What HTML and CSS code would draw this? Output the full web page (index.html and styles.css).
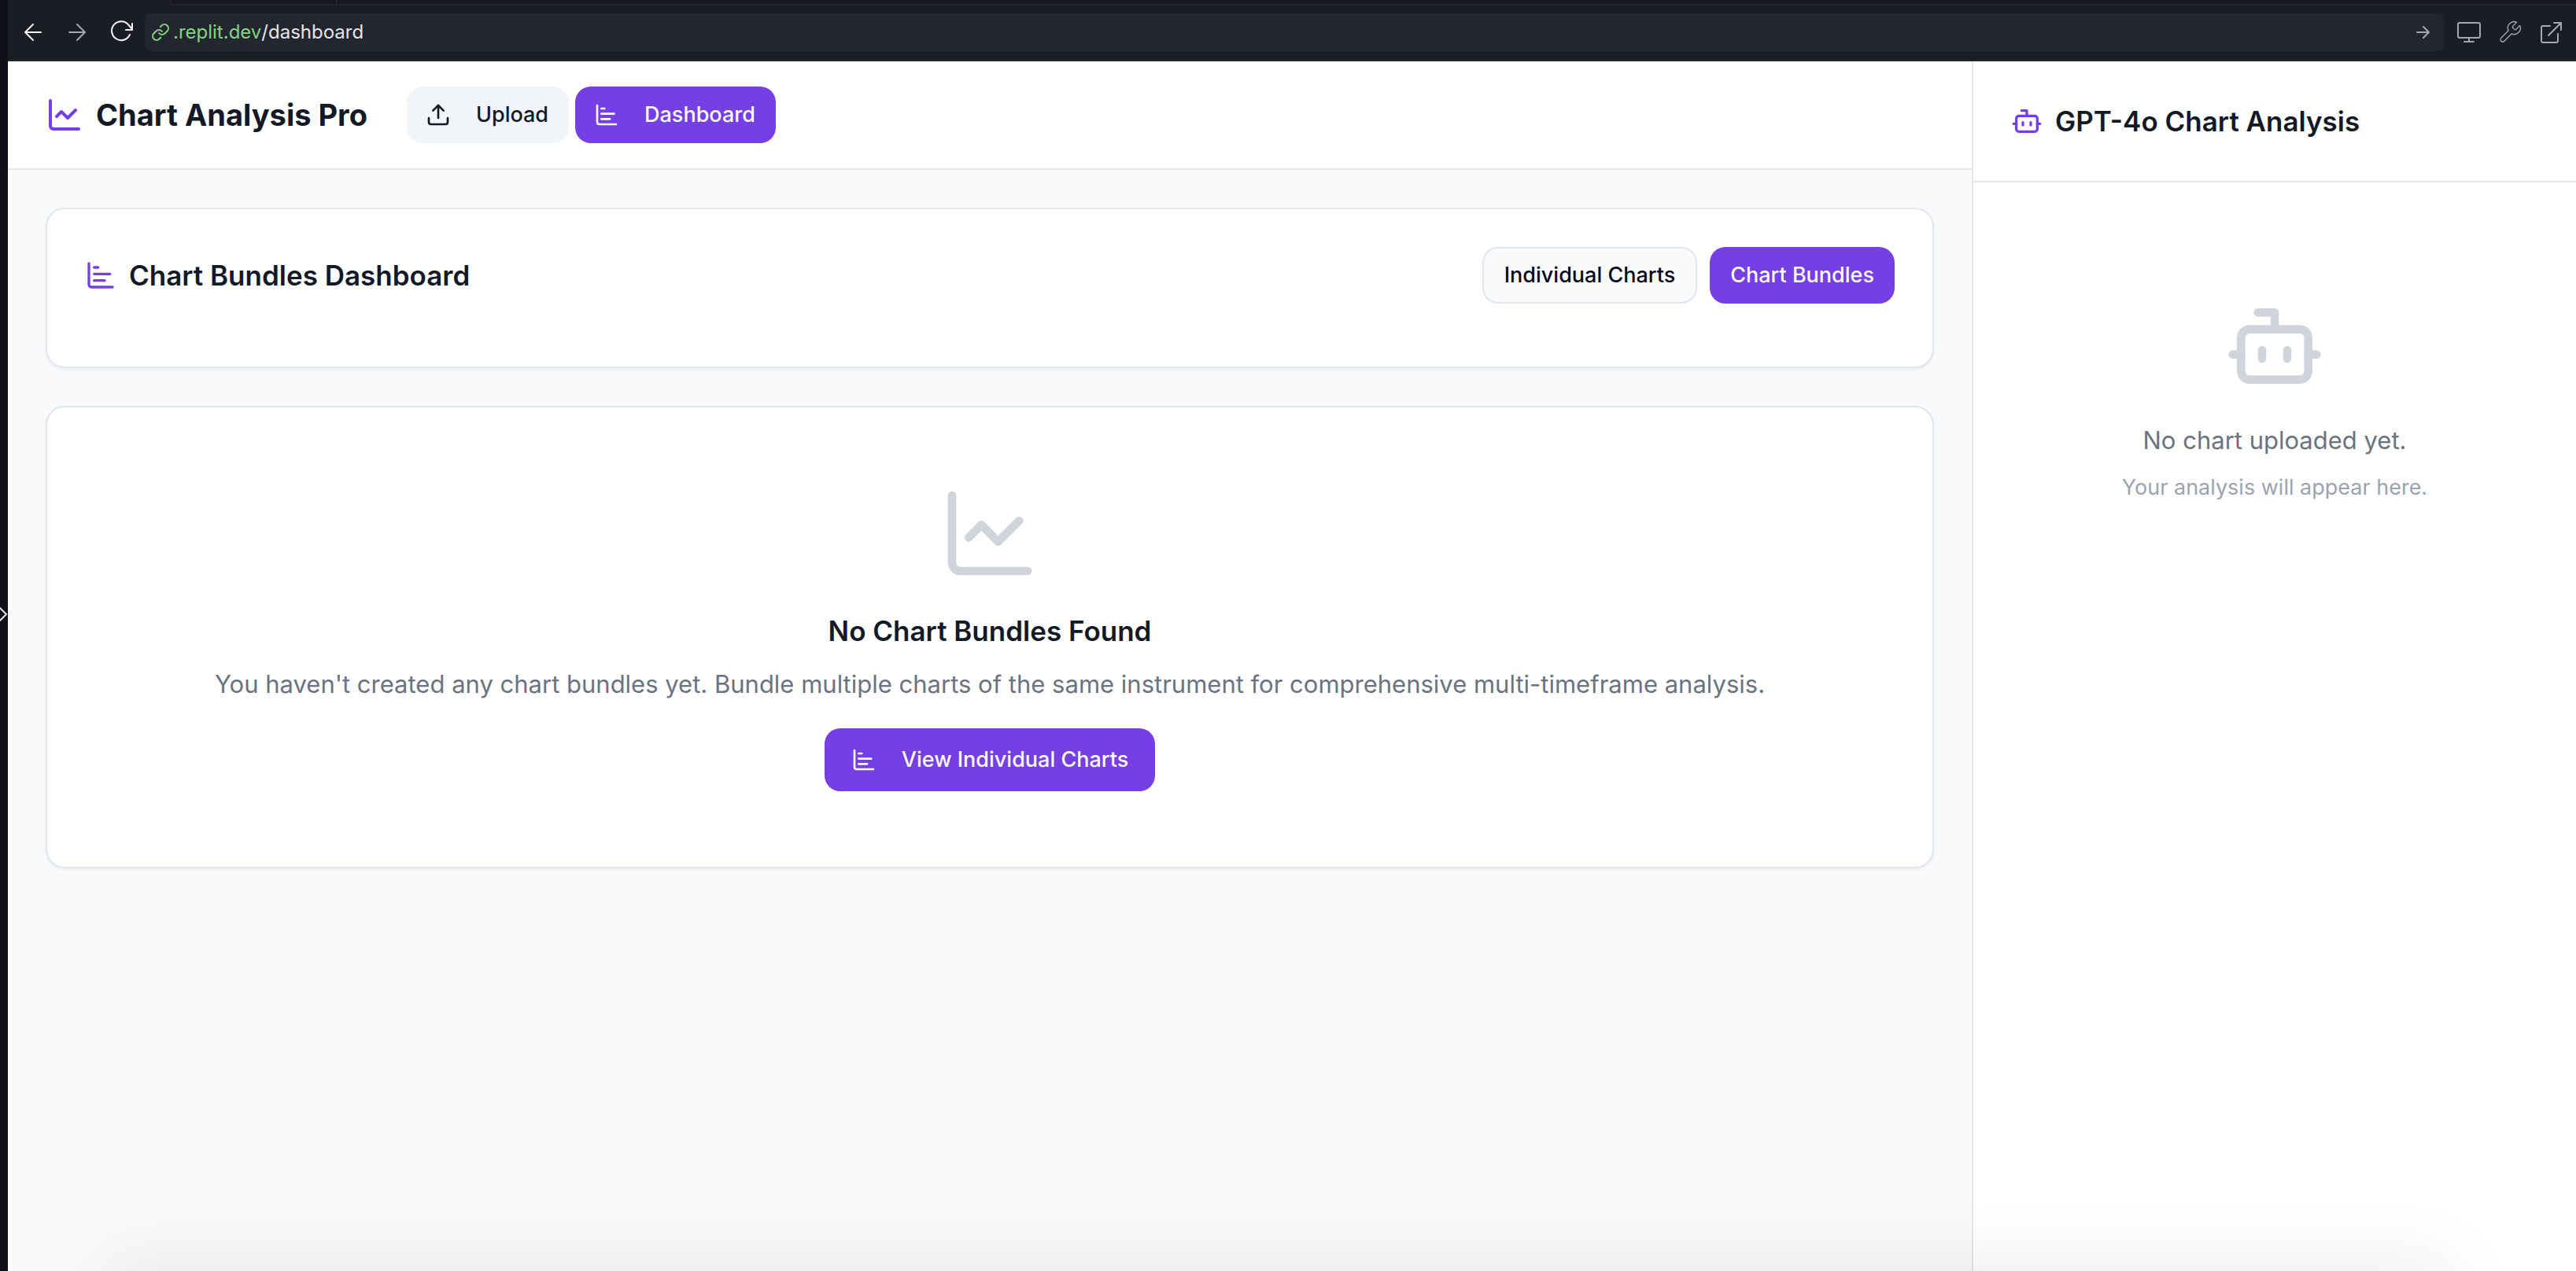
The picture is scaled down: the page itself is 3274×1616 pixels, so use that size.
FILE: index.html
```html
<!DOCTYPE html>
<html lang="en">
<head>
<meta charset="utf-8">
<title>Chart Analysis Pro</title>
<link rel="stylesheet" href="styles.css">
</head>
<body>
<svg class="defs" aria-hidden="true">
  <symbol id="chart-line" viewBox="0 0 24 24"><path d="M3 3v16a2 2 0 0 0 2 2h16"/><path d="m19 9-5 5-4-4-3 3"/></symbol>
  <symbol id="chart-bar" viewBox="0 0 24 24"><path d="M3 3v16a2 2 0 0 0 2 2h16"/><path d="M7 16h8"/><path d="M7 11h12"/><path d="M7 6h3"/></symbol>
  <symbol id="upload" viewBox="0 0 24 24"><path d="M3 15v4a2 2 0 0 0 2 2h14a2 2 0 0 0 2-2v-4"/><path d="m17 8-5-5-5 5"/><path d="M12 3v12"/></symbol>
  <symbol id="bot" viewBox="0 0 24 24"><path d="M12 8V4H8"/><rect width="16" height="12" x="4" y="8" rx="2"/><path d="M2 14h2"/><path d="M20 14h2"/><path d="M15 13v2"/><path d="M9 13v2"/></symbol>
</svg>

<div class="app">
  <div class="resizer">
    <svg class="resizer-icon" viewBox="0 0 10 20"><path d="M0 2l8 8-8 8"/></svg>
  </div>

  <div class="window">
    <div class="browser">
      <div class="tab-edge"><span></span><span></span></div>
      <div class="toolbar">
        <nav class="history">
          <button class="tool bright" aria-label="Back"><svg viewBox="0 0 32 32"><path d="M26 16H6M16 6 6 16l10 10"/></svg></button>
          <button class="tool" aria-label="Forward"><svg viewBox="0 0 32 32"><path d="M6 16h20M16 6l10 10-10 10"/></svg></button>
          <button class="tool bright" aria-label="Reload"><svg viewBox="0 0 32 32"><path d="M30 5v8h-8M30 12l-4-4.500A12 12 0 1 0 27 19"/></svg></button>
        </nav>
        <div class="address">
          <svg class="link-icon" viewBox="0 0 24 24"><path d="M10 13a5 5 0 0 0 7.540.54l3-3a5 5 0 0 0-7.070-7.070l-1.720 1.710"/><path d="M14 11a5 5 0 0 0-7.540-.54l-3 3a5 5 0 0 0 7.070 7.070l1.710-1.710"/></svg>
          <label class="host" for="path">.replit.dev</label>
          <input class="path" id="path" type="text" value="/dashboard">
          <button class="go" aria-label="Go"><svg viewBox="0 0 24 24"><path d="M4 12h15M12 5l7 7-7 7"/></svg></button>
        </div>
        <div class="tools">
          <button class="tool" aria-label="Screen size"><svg viewBox="0 0 32 32"><rect x="2" y="4" width="28" height="19" rx="2"/><path d="M16 23v5M10 28h12"/></svg></button>
          <button class="tool" aria-label="Developer tools"><svg viewBox="0 0 24 24"><path d="M14.700 6.300a1 1 0 0 0 0 1.400l1.600 1.600a1 1 0 0 0 1.400 0l3.770-3.770a6 6 0 0 1-7.940 7.940l-6.910 6.910a2.120 2.120 0 0 1-3-3l6.910-6.910a6 6 0 0 1 7.940-7.940l-3.760 3.760z"/></svg></button>
          <button class="tool" aria-label="Open in new tab"><svg viewBox="0 0 32 32"><path d="M20 4h9v9M29 4 13 20M15 8H6a2 2 0 0 0-2 2v17a2 2 0 0 0 2 2h17a2 2 0 0 0 2-2v-9"/></svg></button>
        </div>
      </div>
    </div>

    <div class="page">
      <div class="content">
        <header class="header">
          <h1 class="brand"><svg class="icon icon-lg"><use href="#chart-line"/></svg>Chart Analysis Pro</h1>
          <nav class="nav">
            <button class="btn btn-muted"><svg class="icon icon-sm"><use href="#upload"/></svg>Upload</button>
            <button class="btn btn-primary"><svg class="icon icon-sm"><use href="#chart-bar"/></svg>Dashboard</button>
          </nav>
        </header>
        <main class="main">
          <section class="card card-head">
            <h2 class="title"><svg class="icon icon-md"><use href="#chart-bar"/></svg>Chart Bundles Dashboard</h2>
            <div class="switch">
              <button class="btn btn-outline">Individual Charts</button>
              <button class="btn btn-primary">Chart Bundles</button>
            </div>
          </section>
          <section class="card empty">
            <svg class="icon icon-xl"><use href="#chart-line"/></svg>
            <h3 class="empty-title">No Chart Bundles Found</h3>
            <p class="text">You haven't created any chart bundles yet. Bundle multiple charts of the same instrument for comprehensive multi-timeframe analysis.</p>
            <button class="btn btn-primary btn-lg"><svg class="icon icon-sm"><use href="#chart-bar"/></svg>View Individual Charts</button>
          </section>
        </main>
      </div>

      <aside class="aside">
        <header class="aside-head">
          <h2 class="title"><svg class="icon icon-md"><use href="#bot"/></svg>GPT-4o Chart Analysis</h2>
        </header>
        <div class="aside-empty">
          <svg class="icon icon-xl"><use href="#bot"/></svg>
          <p class="text">No chart uploaded yet.</p>
          <p class="hint">Your analysis will appear here.</p>
        </div>
      </aside>
      <div class="bottom-shade"></div>
    </div>
  </div>
</div>
</body>
</html>
```
FILE: styles.css
```css
:root {
  --purple: #763fe3;
  --ink: #131927;
  --border: #e1e5ee;
  --line: #e5e7eb;
  --page: #f9fafc;
  --font: Inter, "Liberation Sans", sans-serif;
}

* { box-sizing: border-box; }

body {
  margin: 0;
  font-family: var(--font);
  color: var(--ink);
  background: var(--page);
}

h1, h2, h3, p { margin: 0; }

button, input {
  font: inherit;
  color: inherit;
  border: 0;
  padding: 0;
  background: none;
}

.defs { position: absolute; width: 0; height: 0; }

svg {
  display: block;
  flex: none;
  fill: none;
  stroke: currentColor;
  stroke-width: 2;
  stroke-linecap: round;
  stroke-linejoin: round;
}

.app { display: flex; min-height: 100vh; }

/* Splitter at the left edge */
.resizer {
  display: flex;
  align-items: center;
  width: 10px;
  background: #0f1017;
  color: #e4e4ea;
}
.resizer-icon { width: 10px; height: 20px; margin-bottom: 54px; }

.window { display: flex; flex: 1; flex-direction: column; min-width: 0; }

/* Browser toolbar */
.browser { background: #1b1d25; border-bottom: 2px solid #252731; }

.tab-edge { display: flex; height: 6px; padding-left: 207px; }
.tab-edge span {
  width: 210px;
  background: #181720;
  border: solid #2a2c36;
  border-width: 0 0 1px 1px;
}
.tab-edge span:last-child { flex: 1; }

.toolbar { display: flex; align-items: center; height: 70px; padding-right: 16px; color: #a4a7b2; }

.history { display: flex; gap: 24px; padding: 0 14px 0 16px; }
.tool svg { width: 32px; height: 32px; }
.tool.bright { color: #f2f3f6; }

.address {
  display: flex;
  flex: 1;
  align-items: center;
  height: 48px;
  padding: 0 14px 0 8px;
  border-radius: 8px;
  background: #24262f;
  font-size: 24px;
  line-height: 32px;
}
.link-icon { width: 24px; height: 24px; margin-right: 4px; stroke-width: 2; }
.link-icon, .host { color: #80d580; }
.path { flex: 1; min-width: 0; height: 32px; color: #e4e4ea; outline: 0; }
.go svg { width: 24px; height: 24px; }

.tools { display: flex; gap: 20px; padding-left: 16px; }
.tools svg[viewBox="0 0 24 24"] { stroke-width: 1; }

/* Page */
.page {
  position: relative;
  display: grid;
  flex: 1;
  grid-template-columns: minmax(0, 1fr) 768px;
  overflow: hidden;
}

.header {
  display: flex;
  align-items: center;
  gap: 50px;
  padding: 32px 48px;
  background: #fff;
  border-bottom: 2px solid var(--line);
}

.brand {
  display: flex;
  align-items: center;
  gap: 16px;
  font-size: 38px;
  font-weight: 700;
  line-height: 56px;
}

.nav { display: flex; gap: 8px; }

.icon-sm { width: 32px; height: 32px; }
.icon-md { width: 40px; height: 40px; }
.icon-lg { width: 48px; height: 48px; }
.icon-xl { width: 128px; height: 128px; color: #d1d5db; margin-bottom: 32px; }
.brand .icon, .title .icon { color: var(--purple); }

.btn {
  display: flex;
  align-items: center;
  justify-content: center;
  gap: 32px;
  height: 72px;
  padding: 0 26px;
  border-radius: 20px;
  font-size: 27px;
  font-weight: 500;
  line-height: 40px;
  white-space: nowrap;
}
.nav .btn { padding-left: 24px; }
.btn-lg { height: 80px; padding: 0 34px; }
.btn-muted { background: #f1f4f8; }
.btn-primary { background: var(--purple); color: #f8f9fc; }
.btn-outline { background: var(--page); border: 2px solid var(--border); color: #04081a; }

.main { display: flex; flex-direction: column; gap: 48px; padding: 48px; }

.card {
  background: #fff;
  border: 2px solid var(--border);
  border-radius: 24px;
  box-shadow: 0 2px 4px rgba(0, 0, 0, .05);
}

.card-head {
  display: flex;
  align-items: center;
  justify-content: space-between;
  padding: 48px 48px 80px;
}

.title {
  display: flex;
  align-items: center;
  gap: 16px;
  font-size: 35px;
  font-weight: 600;
  line-height: 56px;
}

.switch { display: flex; gap: 16px; }

.empty {
  display: flex;
  flex-direction: column;
  align-items: center;
  padding: 96px 48px;
  text-align: center;
}
.empty-title { font-size: 35px; font-weight: 600; line-height: 56px; margin-bottom: 16px; }
.text { font-size: 31px; line-height: 48px; color: #6b7280; }
.empty .text { margin-bottom: 32px; }

/* Analysis panel */
.aside { background: #fff; border-left: 2px solid var(--line); }
.aside-head { padding: 48px; border-bottom: 2px solid var(--line); }
.aside-empty {
  display: flex;
  flex-direction: column;
  align-items: center;
  padding: 144px 48px;
}
.hint { margin-top: 16px; font-size: 27px; line-height: 40px; color: #9ca3af; }

/* Soft shade rising from below the window */
.bottom-shade {
  position: absolute;
  right: 160px;
  bottom: -60px;
  left: 120px;
  height: 60px;
  box-shadow: 0 0 100px rgba(0, 0, 0, .11);
}
```
